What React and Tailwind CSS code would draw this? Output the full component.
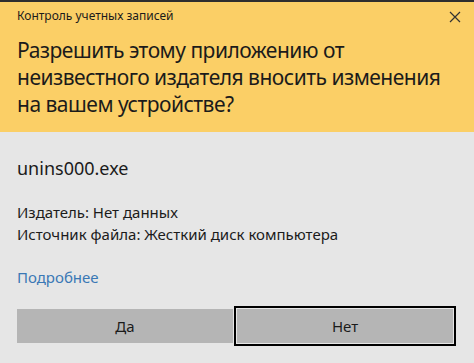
export default function App() {
  return (
    <div
      className="w-[474px] h-[363px] bg-[#e6e6e6] flex flex-col text-[#1b1b1b]"
      style={{ fontFamily: '"Noto Sans", "Open Sans", sans-serif' }}
    >
      <div className="border-t-2 border-[#2e2e2e] bg-[#fbcf66] pl-[17px] pr-[12px] pt-[6px] pb-[14px]">
        <div className="flex items-center justify-between">
          <span className="text-[12px] leading-[16px]">Контроль учетных записей</span>
          <svg width="12" height="12" viewBox="0 0 12 12" className="mr-[1px] mt-[1px]">
            <path d="M1 1 L11 11 M11 1 L1 11" stroke="#333" strokeWidth="1.2" />
          </svg>
        </div>
        <h1 className="mt-[13px] text-[21px] leading-[27px] font-normal tracking-[-0.5px] whitespace-nowrap">
          Разрешить этому приложению от
          <br />
          неизвестного издателя вносить изменения
          <br />
          на вашем устройстве?
        </h1>
      </div>
      <div className="px-[17px]">
        <div className="mt-[24px] text-[18px] leading-[24px]">unins000.exe</div>
        <div className="mt-[21px] text-[15px] leading-[22px]">
          <div>Издатель: Нет данных</div>
          <div>Источник файла: Жесткий диск компьютера</div>
        </div>
        <div className="mt-[21px] text-[15px] leading-[22px] text-[#3a78b5]">Подробнее</div>
        <div className="mt-[21px] flex gap-[4px] pr-[4px]">
          <button className="flex-1 h-[34px] bg-[#b5b5b5] text-[15px] text-[#1b1b1b]">Да</button>
          <button className="flex-1 h-[34px] bg-[#b5b5b5] text-[15px] text-[#1b1b1b] outline-2 outline-black outline-offset-1">
            Нет
          </button>
        </div>
      </div>
    </div>
  );
}
